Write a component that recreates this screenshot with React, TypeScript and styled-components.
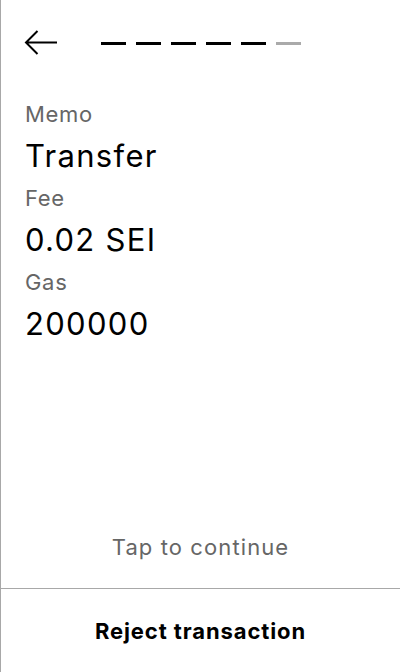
import React from "react";
import styled, { createGlobalStyle } from "styled-components";

const Global = createGlobalStyle`
  html, body { margin: 0; padding: 0; background: #fff; }
  body { font-family: Inter, "Noto Sans", sans-serif; -webkit-font-smoothing: antialiased; }
`;

const Screen = styled.div`
  width: 400px;
  height: 672px;
  box-sizing: border-box;
  border-left: 1px solid #a8a8a8;
  display: flex;
  flex-direction: column;
  background: #fff;
`;

const Header = styled.div`
  display: flex;
  align-items: center;
  height: 86px;
  padding: 0 0 0 23px;
  gap: 43px;
`;

const BackButton = styled.button`
  border: none;
  background: none;
  padding: 0;
  width: 34px;
  height: 28px;
  display: flex;
  align-items: center;
  cursor: pointer;
`;

const Steps = styled.div`
  display: flex;
  gap: 10px;
`;

const Step = styled.div<{ $active: boolean }>`
  width: 25px;
  height: 3px;
  background: ${(p) => (p.$active ? "#000" : "#aaaaaa")};
`;

const Details = styled.div`
  display: flex;
  flex-direction: column;
  padding: 15px 24px 0;
  flex: 1;
`;

const Label = styled.div`
  font-size: 22px;
  line-height: 27px;
  letter-spacing: 0.7px;
  color: #666;
`;

const Value = styled.div`
  font-size: 31px;
  line-height: 57px;
  margin-top: -1px;
  margin-bottom: 1px;
  letter-spacing: 1.3px;
  color: #000;
`;

const Hint = styled.div`
  text-align: center;
  font-size: 22px;
  line-height: 28px;
  letter-spacing: 1.1px;
  color: #666;
  padding-bottom: 27px;
`;

const Footer = styled.button`
  border: none;
  border-top: 1px solid #a8a8a8;
  background: #fff;
  height: 84px;
  width: 100%;
  padding: 0;
  font-family: Inter, "Noto Sans", sans-serif;
  font-size: 22px;
  font-weight: 700;
  letter-spacing: 0.9px;
  color: #000;
  cursor: pointer;
`;

const rows = [
  { label: "Memo", value: "Transfer" },
  { label: "Fee", value: "0.02 SEI" },
  { label: "Gas", value: "200000" },
];

export default function App() {
  return (
    <>
      <Global />
      <Screen>
        <Header>
          <BackButton aria-label="Back">
            <svg width="34" height="28" viewBox="0 0 34 28" fill="none">
              <path d="M33 13.5H2M13.5 2L2 13.5L13.5 25" stroke="#000" strokeWidth="2" />
            </svg>
          </BackButton>
          <Steps>
            {[0, 1, 2, 3, 4, 5].map((i) => (
              <Step key={i} $active={i < 5} />
            ))}
          </Steps>
        </Header>
        <Details>
          {rows.map((r) => (
            <React.Fragment key={r.label}>
              <Label>{r.label}</Label>
              <Value>{r.value}</Value>
            </React.Fragment>
          ))}
        </Details>
        <Hint>Tap to continue</Hint>
        <Footer>Reject transaction</Footer>
      </Screen>
    </>
  );
}
